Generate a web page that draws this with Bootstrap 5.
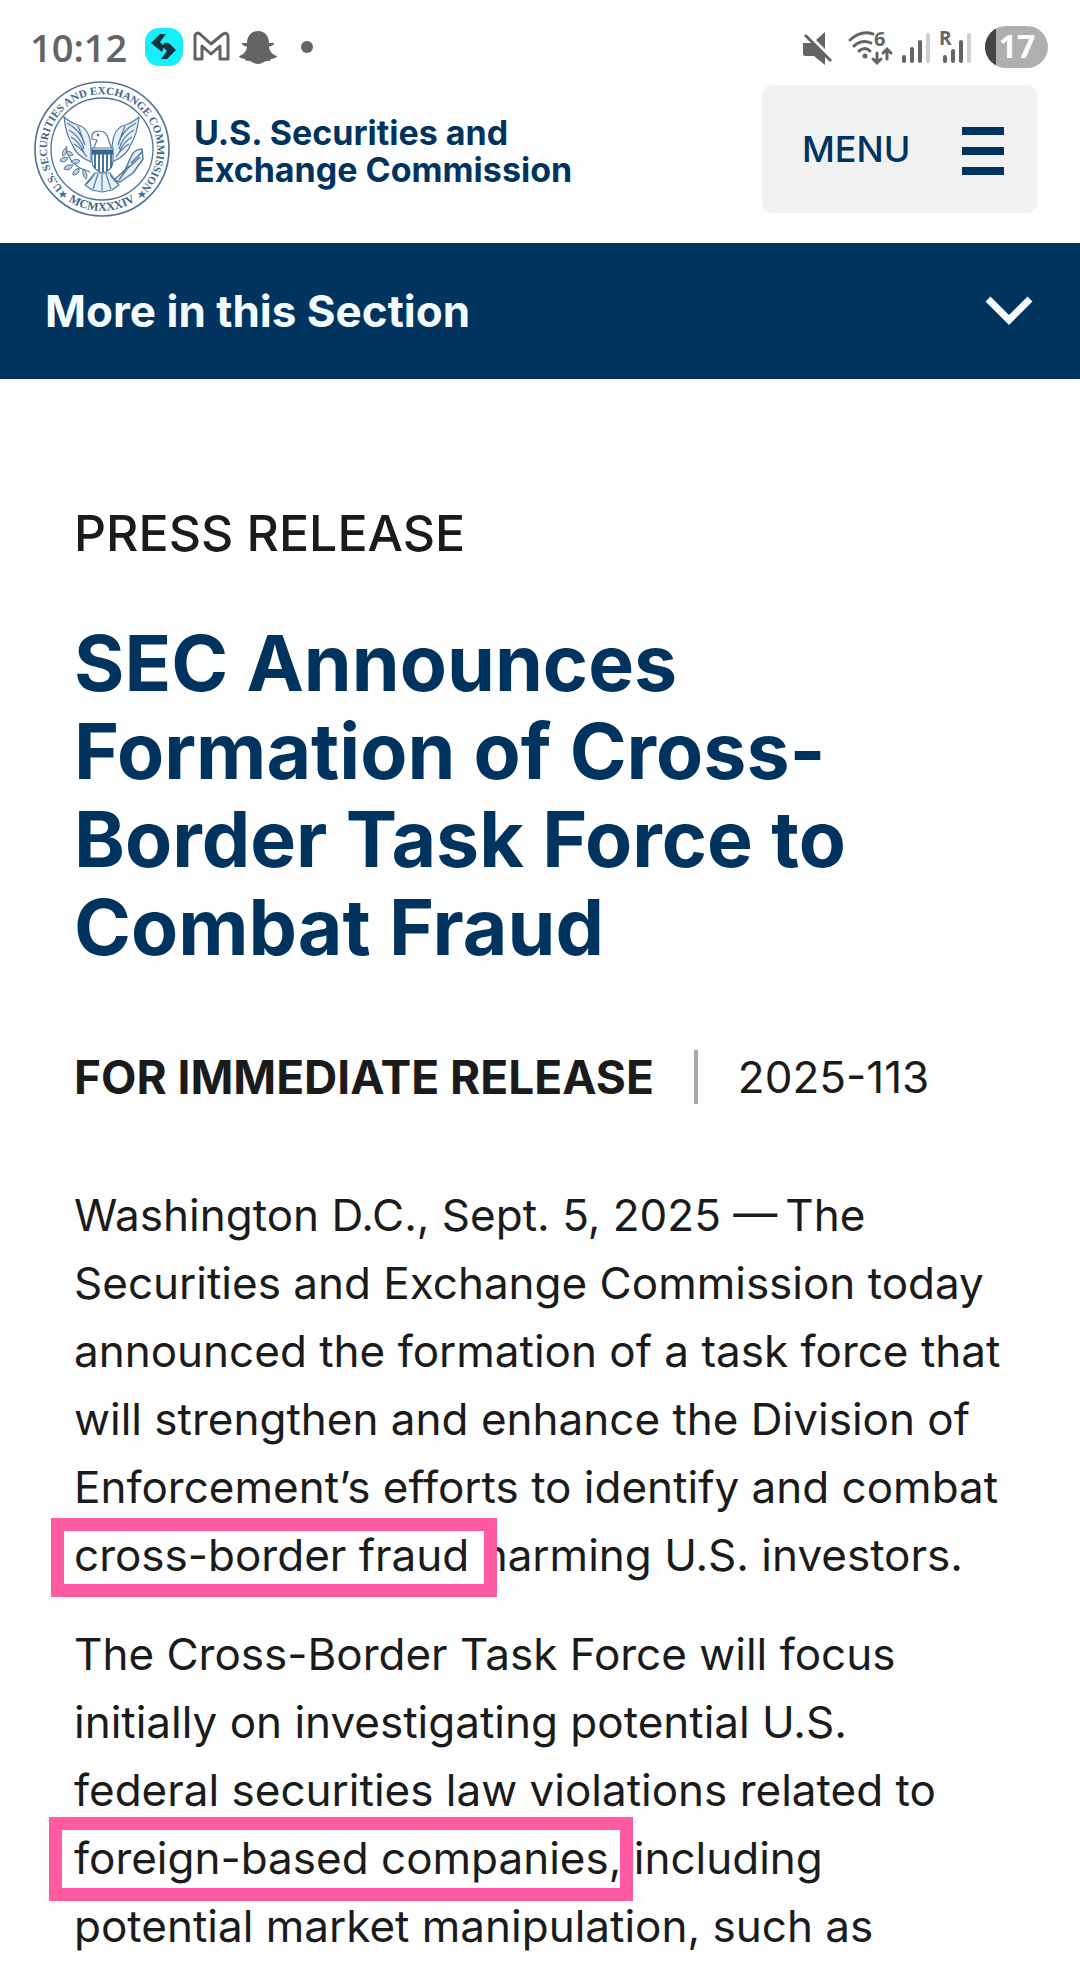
<!DOCTYPE html>
<html lang="en">
<head>
<meta charset="utf-8">
<meta name="viewport" content="width=device-width, initial-scale=1">
<title>SEC Announces Formation of Cross-Border Task Force to Combat Fraud</title>
<link href="https://cdn.jsdelivr.net/npm/bootstrap@5.3.0/dist/css/bootstrap.min.css" rel="stylesheet">
<style>
  :root { --navy: #00345f; --ink: #1b1b1b; --pink: #ff5aa2; --status: #646464; }
  body { font-family: Inter, "Liberation Sans", sans-serif; color: var(--ink); background: #fefefe; }
  .status-bar { height: 80px; padding: 13px 32px 0 30px; color: var(--status); }
  .clock { font: 600 38px/64px "Open Sans", "Noto Sans", sans-serif; margin-right: 17px; }
  .site-header { height: 163px; padding: 0 43px 0 34px; }
  .agency { font-size: 34px; line-height: 37px; font-weight: 700; color: var(--navy); padding-top: 3px; }
  .menu-btn { width: 275px; height: 128px; margin-top: 5px; padding: 0 33px 0 40px; background: #f1f1f1; border: 0; border-radius: 10px; color: var(--navy); font-size: 36px; font-weight: 500; }
  .section-bar { height: 136px; padding: 0 47px 0 45px; background: var(--navy); color: #f3fbff; border: 0; font-size: 44px; font-weight: 700; }
  .release { padding: 126px 74px 0; }
  .kicker { font-size: 50px; line-height: 56px; font-weight: 500; margin-bottom: 58px; }
  .headline { font-size: 77px; line-height: 88px; font-weight: 700; color: var(--navy); margin-bottom: 79px; }
  .meta-row { font-size: 44px; line-height: 54px; margin-bottom: 77px; }
  .meta-row strong { font-size: 46px; }
  .meta-rule { width: 4px; height: 54px; background: #a9a9a9; margin: 0 40px; }
  .story p { font-size: 44px; line-height: 68px; margin-bottom: 31px; white-space: nowrap; }
  .boxed { position: relative; }
  .boxed::after { content: ""; position: absolute; inset: -10px -28px -15px -23px; border: 13px solid var(--pink); }
  .boxed-tight::after { inset: -14px -12px -16px -25px; }
</style>
<script src="https://cdn.jsdelivr.net/npm/bootstrap@5.3.0/dist/js/bootstrap.bundle.min.js"></script>
</head>
<body class="overflow-x-hidden">

<div class="status-bar d-flex align-items-center justify-content-between">
  <div class="d-flex align-items-center">
    <span class="clock">10:12</span>
    <svg width="170" height="42" viewBox="0 0 170 42" aria-hidden="true">
      <rect x="1" y="2" width="38" height="38" rx="14" fill="#14effb"/>
      <path d="M16 8h6l-6 8 4 4-2 6L7 17z M20 17q3-1 6 1l6 6-9 9h-6l6-8-4-4z" fill="#14303c"/>
      <path d="M51 33V9q2-3 5-1l11 10L79 8q4-2 5 2v23h-8V20l-9 8-9-8v13z" fill="none" stroke="#646464" stroke-width="3" stroke-linejoin="round"/>
      <path d="M114 5c-7 0-11 5-11 12l-5 0q-1 2 5 4c-1 5-4 8-8 9q0 2 6 3l1 2c5-1 7 3 12 3s7-4 12-3l1-2q6-1 6-3c-4-1-7-4-8-9q6-2 5-4h-5c0-7-4-12-11-12z" fill="#646464"/>
      <circle cx="163" cy="21" r="6" fill="#646464"/>
    </svg>
  </div>
  <svg width="248" height="44" viewBox="0 0 248 44" aria-hidden="true">
    <g fill="#646464">
      <path d="M3 18h9l13 13v9l-11-9H5q-2 0-2-3z M16 15l9-8v17z"/>
      <path d="M7 9l25 27" stroke="#fefefe" stroke-width="3"/>
      <path d="M5 10l26 26" stroke="#646464" stroke-width="3"/>
      <circle cx="65" cy="31" r="2.5"/>
      <text x="74" y="21" font-family="Open Sans" font-weight="700" font-size="20">6</text>
      <text x="139" y="20" font-family="Open Sans" font-weight="700" font-size="19">R</text>
    </g>
    <g fill="none" stroke="#646464" stroke-width="3" stroke-linecap="round">
      <path d="M50 15q11-10 23-6 M54 21q8-7 17-3 M59 26q6-5 11 0"/>
      <path d="M77 28v10m-4-4l4 4 4-4 M87 34V24m-4 4l4-4 4 4"/>
    </g>
    <g stroke-width="4" stroke-linecap="round" stroke="#646464">
      <path d="M104 32v4M112 24v12M120 17v19"/>
      <path d="M128 10v26M169 10v26" stroke="#cfcfcf"/>
      <path d="M145 32v4M153 26v10M161 17v19"/>
    </g>
    <clipPath id="cell"><rect x="185" y="1" width="63" height="42" rx="21"/></clipPath>
    <g clip-path="url(#cell)"><path d="M185 0h63v44h-63z" fill="#afafaf"/><path d="M185 0h11v44h-11z" fill="#454545"/></g>
    <text x="217" y="33" text-anchor="middle" font-family="Open Sans" font-weight="700" font-size="32" fill="#fff">17</text>
  </svg>
</div>

<header class="site-header d-flex align-items-start justify-content-between">
  <a href="#" class="d-flex align-items-center text-decoration-none">
    <svg class="me-4" width="136" height="138" viewBox="1 0 136 138" role="img" aria-label="SEC seal">
      <defs>
        <path id="arcTop" d="M29 107A55 55 0 1 1 109 107"/>
        <path id="arcLow" d="M16 101A62 62 0 0 0 122 101"/>
      </defs>
      <g fill="none" stroke="#4f7390"><circle cx="69" cy="69" r="67" stroke-width="1.600"/><circle cx="69" cy="69" r="51" stroke-width="1.300"/></g>
      <g font-family="Liberation Serif" font-weight="700" fill="#3d6588">
        <text text-anchor="middle" font-size="11"><textPath href="#arcTop" startOffset="50%">U.S. SECURITIES AND EXCHANGE COMMISSION</textPath></text>
        <text text-anchor="middle" font-size="12"><textPath href="#arcLow" startOffset="50%">MCMXXXIV</textPath></text>
      </g>
      <path d="M30 110l1 3h3l-2 2 1 3-3-2-3 2 1-3-2-2h3zM109 110l1 3h3l-2 2 1 3-3-2-3 2 1-3-2-2h3z" fill="#3f73a5"/>
      <g fill="#e3eff9" stroke="#56799b" stroke-width="1.200" stroke-linejoin="round">
        <path d="M31 37q2 18 8 27 4 12 19 18v-14q-1-20-13-23-7-2-14-8z"/>
        <path d="M106 37q-2 18-8 27-4 12-19 18v-14q1-20 13-23 7-2 14-8z"/>
        <path d="M34 43q14 7 18 22M36 50q11 6 15 19M38 57q9 5 13 16M41 64q7 4 13 13M45 46l5 13M103 43q-14 7-18 22M101 50q-11 6-15 19M99 57q-9 5-13 16M96 64q-7 4-13 13M92 46l-5 13" fill="none"/>
        <path d="M59 58q-1-7 7-7 7 0 9 7l4 12H60l4-10-5-1z" fill="#fff"/>
        <path d="M62 93h15l9 12-7 5-10 2-10-2-7-5z"/>
        <path d="M69 94v17M65 94l-5 15M73 94l5 15M61 95l-7 9M77 95l8 9" fill="none"/>
        <path d="M33 66q2 16 14 22l10 4" fill="none"/>
        <path d="M33 68q-5 3-3 8 5-2 3-8zM33 72q5-2 7 3-5 2-7-3zM35 78q-7-2-8 3 5 3 8-3zM38 82q5-5 9-1-3 5-9 1zM40 85q-8-1-9 4 6 3 9-4zM46 88q-7 2-6 7 7 0 6-7zM50 89q-1 7 3 10 3-5-3-10z" fill="#b7d0e3" stroke-width="1"/>
        <path d="M109 69q-9 1-11 8l-6 13-11 10 6 2 13-9 10-14zM109 72l-11 11M107 77l-13 12M96 86l-10 14" stroke-width="1.500"/>
        <path d="M59 68h21v13q0 9-10 12-11-3-11-12z" fill="#fff"/>
        <path d="M59 72h21" stroke="#376791" stroke-width="5"/>
        <path d="M62 74v14M66 74v17M70 74v18M74 74v17M78 74v14" stroke="#376791" stroke-width="1.800"/>
        <circle cx="65" cy="55" r=".8" fill="#376791"/>
      </g>
    </svg>
    <span class="agency">U.S. Securities and<br>Exchange Commission</span>
  </a>
  <button type="button" class="menu-btn d-flex align-items-center justify-content-between">
    MENU
    <svg class="mt-1" width="42" height="48" viewBox="0 0 42 48" fill="#00345f" aria-hidden="true"><path d="M0 0h42v8H0zM0 20h42v8H0zM0 40h42v8H0z"/></svg>
  </button>
</header>

<button type="button" class="section-bar w-100 d-flex align-items-center justify-content-between">
  More in this Section
  <svg width="48" height="30" viewBox="0 0 48 30" fill="none" stroke="#f3fbff" stroke-width="7" aria-hidden="true"><path d="M3 3l21 21L45 3"/></svg>
</button>

<main class="release">
  <p class="kicker">PRESS RELEASE</p>
  <h1 class="headline">SEC Announces<br>Formation of Cross-<br>Border Task Force to<br>Combat Fraud</h1>
  <div class="meta-row d-flex align-items-center">
    <strong>FOR IMMEDIATE RELEASE</strong><span class="meta-rule"></span><span>2025-113</span>
  </div>
  <div class="story">
    <p>Washington D.C., Sept. 5, 2025 —&thinsp;The<br>Securities and Exchange Commission today<br>announced the formation of a task force that<br>will strengthen and enhance the Division of<br>Enforcement’s efforts to identify and combat<br><span class="boxed">cross-border fraud</span> harming U.S. investors.</p>
    <p class="mb-0">The Cross-Border Task Force will focus<br>initially on investigating potential U.S.<br>federal securities law violations related to<br><span class="boxed boxed-tight">foreign-based companies,</span> including<br>potential market manipulation, such as</p>
  </div>
</main>
</body>
</html>
